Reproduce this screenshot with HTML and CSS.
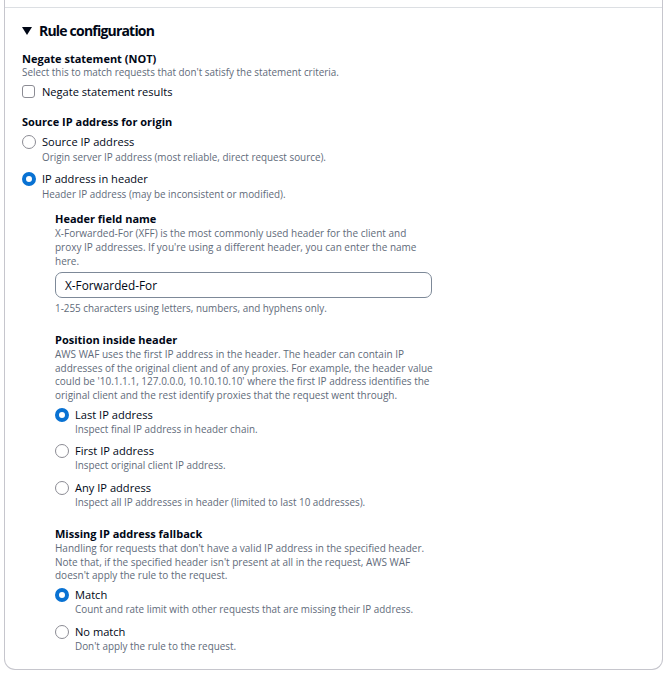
FILE: index.html
```html
<!DOCTYPE html>
<html>
<head>
<meta charset="utf-8">
<link rel="stylesheet" href="styles.css">
</head>
<body>
<div class="card">
  <div class="prev"></div>
  <div class="content">
    <div class="expander">
      <svg class="caret" width="10" height="8" viewBox="0 0 10 8"><polygon points="0,0 10,0 5,8" fill="#000716"/></svg>
      <span class="expander-title">Rule configuration</span>
    </div>

    <div class="field">
      <div class="label">Negate statement (NOT)</div>
      <div class="desc">Select this to match requests that don't satisfy the statement criteria.</div>
      <label class="check-row"><span class="checkbox"></span><span class="opt-label">Negate statement results</span></label>
    </div>

    <div class="field field-gap">
      <div class="label">Source IP address for origin</div>
      <div class="radio-group rg1">
        <div class="radio">
          <div class="radio-row"><span class="circle"></span><span class="opt-label">Source IP address</span></div>
          <div class="radio-desc">Origin server IP address (most reliable, direct request source).</div>
        </div>
        <div class="radio">
          <div class="radio-row"><span class="circle on"></span><span class="opt-label">IP address in header</span></div>
          <div class="radio-desc">Header IP address (may be inconsistent or modified).</div>
        </div>
      </div>
    </div>

    <div class="nested">
      <div class="field">
        <div class="label">Header field name</div>
        <div class="desc">X-Forwarded-For (XFF) is the most commonly used header for the client and proxy IP addresses. If you're using a different header, you can enter the name here.</div>
        <div class="input">X-Forwarded-For</div>
        <div class="hint">1-255 characters using letters, numbers, and hyphens only.</div>
      </div>

      <div class="field field-gap2">
        <div class="label">Position inside header</div>
        <div class="desc">AWS WAF uses the first IP address in the header. The header can contain IP addresses of the original client and of any proxies. For example, the header value could be '10.1.1.1, 127.0.0.0, 10.10.10.10' where the first IP address identifies the original client and the rest identify proxies that the request went through.</div>
        <div class="radio-group rg2">
          <div class="radio">
            <div class="radio-row"><span class="circle on"></span><span class="opt-label">Last IP address</span></div>
            <div class="radio-desc">Inspect final IP address in header chain.</div>
          </div>
          <div class="radio">
            <div class="radio-row"><span class="circle"></span><span class="opt-label">First IP address</span></div>
            <div class="radio-desc">Inspect original client IP address.</div>
          </div>
          <div class="radio">
            <div class="radio-row"><span class="circle"></span><span class="opt-label">Any IP address</span></div>
            <div class="radio-desc">Inspect all IP addresses in header (limited to last 10 addresses).</div>
          </div>
        </div>
      </div>

      <div class="field field-gap2">
        <div class="label">Missing IP address fallback</div>
        <div class="desc">Handling for requests that don't have a valid IP address in the specified header. Note that, if the specified header isn't present at all in the request, AWS WAF doesn't apply the rule to the request.</div>
        <div class="radio-group rg2">
          <div class="radio">
            <div class="radio-row"><span class="circle on"></span><span class="opt-label">Match</span></div>
            <div class="radio-desc">Count and rate limit with other requests that are missing their IP address.</div>
          </div>
          <div class="radio">
            <div class="radio-row"><span class="circle"></span><span class="opt-label">No match</span></div>
            <div class="radio-desc">Don't apply the rule to the request.</div>
          </div>
        </div>
      </div>
    </div>
  </div>
</div>
</body>
</html>
```

FILE: styles.css
```css
html, body {
  margin: 0;
  padding: 0;
  background: #ffffff;
}
body {
  font-family: "Open Sans", "Noto Sans", sans-serif;
  color: #000716;
}
.card {
  margin-left: 4px;
  width: 657px;
  border: 1px solid #c6c6cd;
  border-top: none;
  border-radius: 0 0 11px 11px;
  padding-bottom: 16px;
}
.prev {
  height: 7px;
  border-bottom: 1px solid #dcdfe3;
}
.content {
  padding-left: 17px;
}
.expander {
  display: flex;
  align-items: center;
  gap: 7px;
  margin-top: 13px;
  height: 20px;
}
.caret {
  display: block;
}
.expander-title {
  font-size: 14px;
  font-weight: 700;
  letter-spacing: -0.8px;
  line-height: 20px;
}
.field {
  margin-top: 10px;
}
.field-gap {
  margin-top: 14px;
}
.field-gap2 {
  margin-top: 16px;
}
.label {
  font-size: 11px;
  font-weight: 700;
  line-height: 15px;
}
.desc, .radio-desc, .hint {
  font-size: 9.9px;
  line-height: 13.7px;
  color: #5f6b7a;
}
.nested .desc {
  font-size: 10px;
  max-width: 378px;
  margin-top: 1px;
}
.check-row {
  display: flex;
  align-items: center;
  gap: 7px;
  margin-top: 4px;
  height: 16px;
}
.checkbox {
  width: 11px;
  height: 11px;
  border: 1.5px solid #8c8c94;
  border-radius: 3px;
}
.opt-label {
  font-size: 11.1px;
  line-height: 16px;
}
.radio-group {
  display: flex;
  flex-direction: column;
  gap: 7px;
  margin-top: 4px;
}
.rg1 {
  margin-top: 5px;
}
.rg1 .radio-desc {
  margin-top: 1px;
}
.radio-row {
  display: flex;
  align-items: center;
  gap: 6px;
  height: 16px;
}
.circle {
  box-sizing: border-box;
  width: 14px;
  height: 14px;
  border: 1.5px solid #8c8c94;
  border-radius: 50%;
  background: #fff;
}
.circle.on {
  border: 4px solid #0972d3;
}
.radio-desc {
  padding-left: 20px;
}
.nested {
  padding-left: 33px;
  margin-top: 9px;
}
.nested > .field:first-child {
  margin-top: 0;
}
.input {
  box-sizing: border-box;
  width: 377px;
  height: 26px;
  margin-top: 4px;
  border: 1px solid #7d8998;
  border-radius: 7px;
  padding: 1px 0 0 9px;
  font-size: 11.8px;
  line-height: 23px;
  color: #000716;
}
.hint {
  margin-top: 4px;
}
```
